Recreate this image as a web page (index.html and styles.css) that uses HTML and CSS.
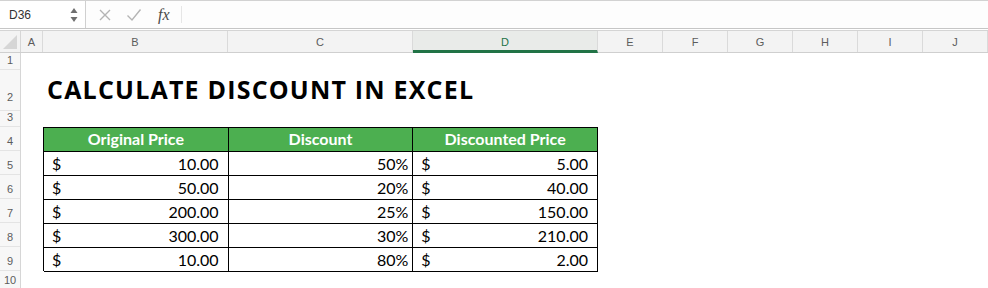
FILE: index.html
```html
<!DOCTYPE html>
<html>
    <head>
        <title>Calculate Discount in Excel</title>
        <link rel="stylesheet" href="styles.css">
    </head>

    <body>
        <div class="formula-bar">
            <div class="name-box">
                <span class="cell-ref">D36</span>
                <svg class="spinner" width="8" height="16" viewBox="0 0 8 16">
                    <path d="M4 1 L7.5 6 L0.5 6 Z" fill="#6f6f6f"/>
                    <path d="M4 15 L7.5 10 L0.5 10 Z" fill="#6f6f6f"/>
                </svg>
            </div>
            <div class="fx-tools">
                <svg class="tool" width="14" height="14" viewBox="0 0 14 14">
                    <path d="M2 2 L12 12 M12 2 L2 12" stroke="#b4b4b4" stroke-width="1.4" fill="none"/>
                </svg>
                <svg class="tool" width="16" height="14" viewBox="0 0 16 14">
                    <path d="M1.5 7.5 L6 12 L14.5 1.5" stroke="#b4b4b4" stroke-width="1.4" fill="none"/>
                </svg>
                <span class="fx">fx</span>
            </div>
            <div class="formula-input"></div>
        </div>

        <div class="col-heads">
            <div class="corner">
                <svg width="14" height="14" viewBox="0 0 14 14">
                    <path d="M14 0 L14 14 L0 14 Z" fill="#d6d6d6"/>
                </svg>
            </div>
            <div class="col-head narrow">A</div>
            <div class="col-head wide">B</div>
            <div class="col-head wide">C</div>
            <div class="col-head wide selected">D</div>
            <div class="col-head">E</div>
            <div class="col-head">F</div>
            <div class="col-head">G</div>
            <div class="col-head">H</div>
            <div class="col-head">I</div>
            <div class="col-head">J</div>
        </div>

        <div class="sheet">
            <div class="row-heads">
                <div class="row-head row-short">1</div>
                <div class="row-head row-title">2</div>
                <div class="row-head row-gap">3</div>
                <div class="row-head">4</div>
                <div class="row-head">5</div>
                <div class="row-head">6</div>
                <div class="row-head">7</div>
                <div class="row-head">8</div>
                <div class="row-head">9</div>
                <div class="row-head row-last">10</div>
            </div>

            <div class="cells">
                <h1 class="title">CALCULATE DISCOUNT IN EXCEL</h1>

                <div class="prices">
                    <div class="th">Original Price</div>
                    <div class="th">Discount</div>
                    <div class="th">Discounted Price</div>

                    <div class="td money"><span>$</span><span>10.00</span></div>
                    <div class="td pct">50%</div>
                    <div class="td money"><span>$</span><span>5.00</span></div>

                    <div class="td money"><span>$</span><span>50.00</span></div>
                    <div class="td pct">20%</div>
                    <div class="td money"><span>$</span><span>40.00</span></div>

                    <div class="td money"><span>$</span><span>200.00</span></div>
                    <div class="td pct">25%</div>
                    <div class="td money"><span>$</span><span>150.00</span></div>

                    <div class="td money"><span>$</span><span>300.00</span></div>
                    <div class="td pct">30%</div>
                    <div class="td money"><span>$</span><span>210.00</span></div>

                    <div class="td money"><span>$</span><span>10.00</span></div>
                    <div class="td pct">80%</div>
                    <div class="td money"><span>$</span><span>2.00</span></div>
                </div>
            </div>
        </div>
    </body>
</html>
```

FILE: styles.css
```css
* {box-sizing: border-box}

body {
  margin: 0;
  background: #ffffff;
  font-family: "Liberation Sans", Arial, sans-serif;
  overflow: hidden;
}

/* Formula bar */
.formula-bar {
  display: flex;
  height: 29px;
  border-top: 1px solid #d2d2d2;
  border-bottom: 1px solid #c6c6c6;
  background: #fdfdfd;
}

.name-box {
  display: flex;
  align-items: center;
  justify-content: space-between;
  width: 86px;
  padding: 0 7px 0 9px;
  border-right: 1px solid #d0d0d0;
  background: #ffffff;
}

.cell-ref {
  font-size: 12px;
  color: #333;
}

.fx-tools {
  display: flex;
  align-items: center;
  gap: 14px;
  width: 96px;
  padding-left: 12px;
  border-right: 1px solid #e6e6e6;
  margin: 5px 0;
}

.fx {
  font-family: "Liberation Serif", serif;
  font-style: italic;
  font-size: 16px;
  color: #4a4a4a;
  margin-left: 2px;
}

.formula-input {
  flex: 1;
}

/* Column headers */
.col-heads {
  display: flex;
  height: 23px;
  margin-top: 1px;
  border-top: 1px solid #d4d4d4;
  border-bottom: 1px solid #cfcfcf;
  background: #f3f3f3;
}

.corner {
  display: flex;
  align-items: flex-end;
  justify-content: flex-end;
  width: 22px;
  padding: 0 3px 3px 0;
  border-right: 1px solid #d6d6d6;
}

.col-head {
  display: flex;
  align-items: center;
  justify-content: center;
  width: 65px;
  flex-shrink: 0;
  border-right: 1px solid #dadada;
  font-size: 11px;
  color: #5c5c5c;
}

.col-head.narrow { width: 22px; }
.col-head.wide { width: 185px; }

.col-head.selected {
  background: #e9ebe9;
  color: #217346;
  border-bottom: 3px solid #217346;
  padding-top: 3px;
  margin-bottom: -1px;
}

/* Sheet */
.sheet {
  display: flex;
}

.row-heads {
  width: 22px;
  border-right: 1px solid #d6d6d6;
  background: #f7f7f7;
}

.row-head {
  display: flex;
  align-items: flex-end;
  justify-content: center;
  height: 24px;
  padding-bottom: 3px;
  border-bottom: 1px solid #e4e4e4;
  font-size: 11px;
  color: #5c5c5c;
}

.row-head.row-short { height: 17px; }
.row-head.row-title { height: 41px; padding-bottom: 7px; }
.row-head.row-gap { height: 16px; }
.row-head.row-last { height: 18px; padding-bottom: 2px; }

.cells {
  display: grid;
  grid-template-columns: 22px 185px 185px 185px repeat(6, 65px);
  grid-template-rows: 17px 41px 16px repeat(7, 24px);
}

.title {
  grid-column: 2 / 6;
  grid-row: 2;
  align-self: end;
  margin: 0;
  padding: 0 0 5px 4px;
  font-family: "Open Sans", Lato, sans-serif;
  font-size: 25px;
  font-weight: 700;
  letter-spacing: 1.2px;
  white-space: nowrap;
  color: #000;
}

/* Data table */
.prices {
  grid-column: 2 / 5;
  grid-row: 4 / 10;
  display: grid;
  grid-template-columns: repeat(3, 1fr);
  grid-auto-rows: 24px;
  border-left: 1px solid #000;
  border-top: 1px solid #000;
  font-family: Lato, "Open Sans", sans-serif;
  font-size: 16px;
  color: #000;
}

.th, .td {
  display: flex;
  align-items: flex-end;
  padding-bottom: 2px;
  border-right: 1px solid #000;
  border-bottom: 1px solid #000;
}

.th {
  justify-content: center;
  padding-bottom: 3px;
  background: #4caf50;
  color: #ffffff;
  font-weight: 700;
  font-size: 16px;
}

.money {
  justify-content: space-between;
  padding-left: 8px;
  padding-right: 9px;
}

.pct {
  justify-content: flex-end;
  padding-right: 4px;
}
```
